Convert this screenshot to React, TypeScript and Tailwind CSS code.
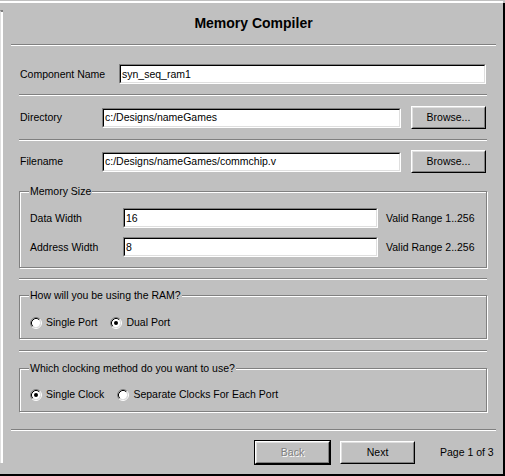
import type { ReactNode } from "react";

function Etched({ className = "" }: { className?: string }) {
  return <div className={`h-[2px] border-t border-b border-t-[#808080] border-b-white ${className}`} />;
}

function Field({ value, className = "" }: { value: string; className?: string }) {
  return (
    <div
      className={`h-[20px] border border-t-[#808080] border-l-[#808080] border-r-white border-b-white ${className}`}
    >
      <div className="flex h-full items-center border border-t-black border-l-black border-r-[#dfdfdf] border-b-[#dfdfdf] bg-white pl-px">
        {value}
      </div>
    </div>
  );
}

function Btn({ children, disabled = false }: { children: ReactNode; disabled?: boolean }) {
  return (
    <button className="h-[23px] w-[75px] shrink-0 border border-t-white border-l-white border-r-black border-b-black bg-[#c0c0c0]">
      <div
        className={`flex h-full items-center justify-center border border-t-[#dfdfdf] border-l-[#dfdfdf] border-r-[#808080] border-b-[#808080] ${
          disabled ? "text-[#808080] [text-shadow:1px_1px_0_#fff]" : "text-black"
        }`}
      >
        {children}
      </div>
    </button>
  );
}

function Radio({ checked }: { checked: boolean }) {
  return (
    <svg width="12" height="12" viewBox="0 0 12 12" className="shrink-0">
      <circle cx="6" cy="6" r="4.2" fill="#fff" />
      <path d="M2.11 9.89 A5.5 5.5 0 0 1 9.89 2.11" stroke="#808080" fill="none" />
      <path d="M9.89 2.11 A5.5 5.5 0 0 1 2.11 9.89" stroke="#fff" fill="none" />
      <path d="M2.82 9.18 A4.5 4.5 0 0 1 9.18 2.82" stroke="#000" fill="none" />
      <path d="M9.18 2.82 A4.5 4.5 0 0 1 2.82 9.18" stroke="#dfdfdf" fill="none" />
      {checked && <circle cx="6" cy="6" r="2" fill="#000" />}
    </svg>
  );
}

function Group({ title, children, className = "" }: { title: string; children: ReactNode; className?: string }) {
  return (
    <fieldset
      className={`ml-[15px] mr-[16px] border border-[#808080] pl-[10px] shadow-[inset_1px_1px_0_#fff,1px_1px_0_#fff] ${className}`}
    >
      <legend className="-ml-px bg-[#c0c0c0] px-px leading-[13px]">{title}</legend>
      {children}
    </fieldset>
  );
}

function RadioItem({ label, checked }: { label: string; checked: boolean }) {
  return (
    <label className="flex items-center gap-[4px]">
      <Radio checked={checked} />
      <span>{label}</span>
    </label>
  );
}

export default function App() {
  return (
    <div className="flex h-[476px] w-[505px] flex-col overflow-hidden bg-[#c0c0c0] font-['Liberation_Sans',Arial,sans-serif] text-[10.5px] leading-[13px] text-black">
      <div className="mt-px mr-[2px] h-[2px] bg-white" />
      <div className="flex min-h-0 flex-1">
        <div className="flex w-[4px] flex-col pt-[7px] pb-[11px]">
          <div className="w-[3px] flex-1 border-t-2 border-l border-t-[#808080] border-l-[#dfdfdf] bg-white" />
        </div>

        <div className="flex flex-1 flex-col">
          <h1 className="mt-[12px] text-center text-[14px] leading-[16px] font-bold">Memory Compiler</h1>
          <Etched className="mx-[7px] mt-[13px]" />

          <div className="mt-[18px] ml-[15px] mr-[16px] flex h-[20px] items-center">
            <span className="w-[100px] shrink-0 pl-px">Component Name</span>
            <Field value="syn_seq_ram1" className="mr-px flex-1" />
          </div>
          <Etched className="mt-[10px] ml-[15px] mr-[16px]" />

          <div className="mt-[10px] ml-[15px] mr-[16px] flex h-[23px] items-center">
            <span className="w-[83px] shrink-0 pl-px">Directory</span>
            <Field value="c:/Designs/nameGames" className="flex-1" />
            <div className="ml-[10px] mr-px">
              <Btn>Browse...</Btn>
            </div>
          </div>
          <Etched className="mt-[10px] ml-[15px] mr-[16px]" />

          <div className="mt-[9px] ml-[15px] mr-[16px] flex h-[23px] items-center">
            <span className="w-[83px] shrink-0 pl-px">Filename</span>
            <Field value="c:/Designs/nameGames/commchip.v" className="flex-1" />
            <div className="ml-[10px] mr-px">
              <Btn>Browse...</Btn>
            </div>
          </div>

          <Group title="Memory Size" className="mt-[12px] pb-[10px]">
            <div className="mt-[10px] flex h-[20px] items-center">
              <span className="w-[93px] shrink-0">Data Width</span>
              <Field value="16" className="w-[255px]" />
              <span className="ml-[8px]">Valid Range 1..256</span>
            </div>
            <div className="mt-[9px] flex h-[20px] items-center">
              <span className="w-[93px] shrink-0">Address Width</span>
              <Field value="8" className="w-[255px]" />
              <span className="ml-[8px]">Valid Range 2..256</span>
            </div>
          </Group>
          <Etched className="mt-[10px] ml-[15px] mr-[16px]" />

          <Group title="How will you be using the RAM?" className="mt-[9px] pb-[9px]">
            <div className="mt-[14px] flex h-[13px] items-center gap-[13px]">
              <RadioItem label="Single Port" checked={false} />
              <RadioItem label="Dual Port" checked />
            </div>
          </Group>
          <Etched className="mt-[11px] ml-[15px] mr-[16px]" />

          <Group title="Which clocking method do you want to use?" className="mt-[10px] pb-[10px]">
            <div className="mt-[13px] flex h-[13px] items-center gap-[13px]">
              <RadioItem label="Single Clock" checked />
              <RadioItem label="Separate Clocks For Each Port" checked={false} />
            </div>
          </Group>
          <Etched className="mx-[7px] mt-[17px]" />

          <div className="mt-[9px] flex h-[25px] items-center">
            <div className="ml-[250px] h-[25px] w-[77px] border border-black">
              <Btn disabled>Back</Btn>
            </div>
            <div className="ml-[9px]">
              <Btn>Next</Btn>
            </div>
            <span className="ml-[25px]">Page 1 of 3</span>
          </div>
        </div>

        <div className="w-[2px] bg-black" />
      </div>
      <div className="h-[2px] bg-black" />
    </div>
  );
}
